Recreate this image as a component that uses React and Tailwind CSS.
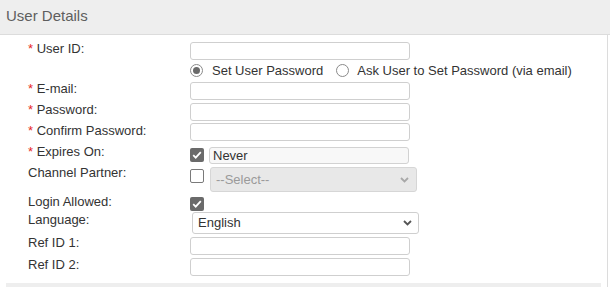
import React from 'react'

const font = { fontFamily: '"Liberation Sans", Arial, sans-serif' }

function Req() {
  return <span className="text-[#e8281e]">* </span>
}

function Chevron({ color }) {
  return (
    <svg width="9" height="6" viewBox="0 0 9 6" className="block">
      <path d="M1 1l3.5 3.5L8 1" fill="none" stroke={color} strokeWidth="1.8" />
    </svg>
  )
}

function Row({ h, label, children }) {
  return (
    <div className={`flex ${h}`}>
      <div className="w-[162px] shrink-0 leading-[15px] text-[#333]">{label}</div>
      <div>{children}</div>
    </div>
  )
}

const textInput = 'block h-[18px] w-[220px] rounded-[3px] border border-[#cfcfcf] bg-white outline-none'

export default function App() {
  return (
    <div className="w-[610px] h-[287px] overflow-hidden bg-white text-[13px]" style={font}>
      {/* Header */}
      <div className="h-[35px] border-b border-[#dcdcdc] bg-[#eeeeee] pl-[6px] pt-[7px] text-[15px] leading-[17px] text-[#5e5e5e]">
        User Details
      </div>

      <div className="w-[608px] h-[252px] border-r border-[#dcdcdc]">
        <div className="pl-[28px] pt-[6px]">
          <Row h="h-[20px]" label={<><Req />User ID:</>}>
            <input className={`${textInput} mt-[1px]`} />
          </Row>

          <Row h="h-[20px]" label="">
            <div className="flex h-[19px] items-center text-[#333]">
              <span className="flex h-[13px] w-[13px] items-center justify-center rounded-full border border-[#8a8a8a] bg-white">
                <span className="h-[7px] w-[7px] rounded-full bg-[#6a6a6a]" />
              </span>
              <span className="ml-[9px]">Set User Password</span>
              <span className="ml-[13px] h-[13px] w-[13px] rounded-full border border-[#8a8a8a] bg-white" />
              <span className="ml-[8px]">Ask User to Set Password (via email)</span>
            </div>
          </Row>

          <Row h="h-[21px]" label={<><Req />E-mail:</>}>
            <input className={`${textInput} mt-[1px]`} />
          </Row>

          <Row h="h-[21px]" label={<><Req />Password:</>}>
            <input type="password" className={`${textInput} mt-[1px]`} />
          </Row>

          <Row h="h-[21px]" label={<><Req />Confirm Password:</>}>
            <input type="password" className={textInput} />
          </Row>

          <Row h="h-[21px]" label={<><Req />Expires On:</>}>
            <div className="flex items-start">
              <span className="mt-[4px] flex h-[14px] w-[14px] items-center justify-center rounded-[2px] bg-[#6a6a6a]">
                <svg width="10" height="8" viewBox="0 0 10 8">
                  <path d="M1.2 4.2l2.5 2.4L8.8 1.2" fill="none" stroke="#fff" strokeWidth="1.8" />
                </svg>
              </span>
              <div className="ml-[5px] mt-[3px] h-[17px] w-[200px] rounded-[3px] border border-[#d2d2d2] bg-[#f8f8f8] pl-[3px] leading-[15px] text-[#333]">
                Never
              </div>
            </div>
          </Row>

          <Row h="h-[29px]" label="Channel Partner:">
            <div className="flex items-start">
              <span className="mt-[4px] h-[14px] w-[14px] rounded-[2px] border border-[#7a7a7a] bg-white" />
              <div className="ml-[6px] mt-[2px] flex h-[25px] w-[207px] items-center justify-between rounded-[3px] border border-[#d6d6d6] bg-[#e8e8e8] pl-[5px] pr-[7px] text-[#9a9a9a]">
                <span>--Select--</span>
                <Chevron color="#a8a8a8" />
              </div>
            </div>
          </Row>

          <Row h="h-[18px]" label="Login Allowed:">
            <span className="mt-[3px] flex h-[14px] w-[14px] items-center justify-center rounded-[2px] bg-[#6a6a6a]">
              <svg width="10" height="8" viewBox="0 0 10 8">
                <path d="M1.2 4.2l2.5 2.4L8.8 1.2" fill="none" stroke="#fff" strokeWidth="1.8" />
              </svg>
            </span>
          </Row>

          <Row h="h-[23px]" label="Language:">
            <div className="ml-[2px] flex h-[22px] w-[227px] items-center justify-between rounded-[3px] border border-[#cfcfcf] bg-white pl-[5px] pr-[6px] text-[#333]">
              <span>English</span>
              <Chevron color="#555" />
            </div>
          </Row>

          <Row h="h-[22px]" label="Ref ID 1:">
            <input className={`${textInput} mt-[2px]`} />
          </Row>

          <Row h="h-[22px]" label="Ref ID 2:">
            <input className={`${textInput} mt-[1px]`} />
          </Row>
        </div>
        <div className="ml-[6px] mt-[4px] h-[10px] w-[595px] bg-[#eeeeee]" />
      </div>
    </div>
  )
}
